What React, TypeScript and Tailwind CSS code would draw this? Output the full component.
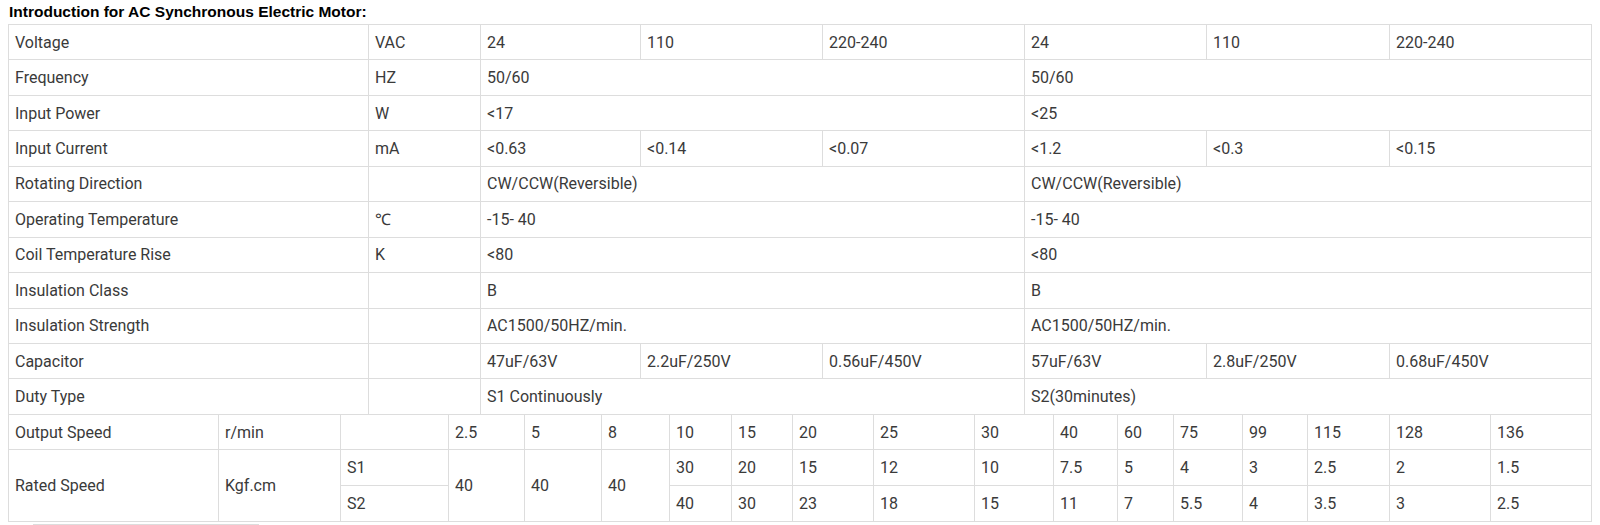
import React from "react";

type Cell = { t: string; span?: number; rspan?: number };

const topRows: Cell[][] = [
  [{ t: "Voltage" }, { t: "VAC" }, { t: "24" }, { t: "110" }, { t: "220-240" }, { t: "24" }, { t: "110" }, { t: "220-240" }],
  [{ t: "Frequency" }, { t: "HZ" }, { t: "50/60", span: 3 }, { t: "50/60", span: 3 }],
  [{ t: "Input Power" }, { t: "W" }, { t: "<17", span: 3 }, { t: "<25", span: 3 }],
  [{ t: "Input Current" }, { t: "mA" }, { t: "<0.63" }, { t: "<0.14" }, { t: "<0.07" }, { t: "<1.2" }, { t: "<0.3" }, { t: "<0.15" }],
  [{ t: "Rotating Direction" }, { t: "" }, { t: "CW/CCW(Reversible)", span: 3 }, { t: "CW/CCW(Reversible)", span: 3 }],
  [{ t: "Operating Temperature" }, { t: "℃" }, { t: "-15- 40", span: 3 }, { t: "-15- 40", span: 3 }],
  [{ t: "Coil Temperature Rise" }, { t: "K" }, { t: "<80", span: 3 }, { t: "<80", span: 3 }],
  [{ t: "Insulation Class" }, { t: "" }, { t: "B", span: 3 }, { t: "B", span: 3 }],
  [{ t: "Insulation Strength" }, { t: "" }, { t: "AC1500/50HZ/min.", span: 3 }, { t: "AC1500/50HZ/min.", span: 3 }],
  [{ t: "Capacitor" }, { t: "" }, { t: "47uF/63V" }, { t: "2.2uF/250V" }, { t: "0.56uF/450V" }, { t: "57uF/63V" }, { t: "2.8uF/250V" }, { t: "0.68uF/450V" }],
  [{ t: "Duty Type" }, { t: "" }, { t: "S1 Continuously", span: 3 }, { t: "S2(30minutes)", span: 3 }],
];

const speeds = ["2.5", "5", "8", "10", "15", "20", "25", "30", "40", "60", "75", "99", "115", "128", "136"];
const s1 = ["30", "20", "15", "12", "10", "7.5", "5", "4", "3", "2.5", "2", "1.5"];
const s2 = ["40", "30", "23", "18", "15", "11", "7", "5.5", "4", "3.5", "3", "2.5"];

const cellCls = "bg-white flex items-center pl-[6px] whitespace-nowrap overflow-hidden";

export default function App() {
  return (
    <div
      className="bg-white w-[1600px] h-[525px] pl-[8px] text-[#3a3a3a]"
      style={{ fontFamily: "Roboto, 'Noto Sans', sans-serif" }}
    >
      <div
        className="pt-[3px] h-[24px] text-[15.5px] leading-[18px] font-bold text-black pl-[1px]"
        style={{ fontFamily: "'Liberation Sans', Arial, sans-serif" }}
      >
        Introduction for AC Synchronous Electric Motor:
      </div>
      <div className="w-[1584px] text-[16px] leading-[19px]">
        <div className="grid grid-cols-[359px_111px_159px_181px_201px_181px_182px_201px] auto-rows-[34.45px] gap-[1px] p-[1px] bg-[#dddddd]">
          {topRows.map((row, ri) =>
            row.map((c, ci) => (
              <div
                key={`${ri}-${ci}`}
                className={`${cellCls} ${c.span === 3 ? "col-span-3" : ""}`}
              >
                {c.t}
              </div>
            ))
          )}
        </div>
        <div className="grid grid-cols-[209px_121px_107px_75px_76px_67px_61px_60px_80px_100px_78px_63px_55px_68px_64px_81px_100px_100px] grid-rows-[34.67px_34.67px_34.67px] gap-[1px] px-[1px] pb-[1px] bg-[#dddddd]">
          <div className={cellCls}>Output Speed</div>
          <div className={cellCls}>r/min</div>
          <div className={cellCls}></div>
          {speeds.map((s, i) => (
            <div key={`sp${i}`} className={cellCls}>
              {s}
            </div>
          ))}
          <div className={`${cellCls} row-span-2`}>Rated Speed</div>
          <div className={`${cellCls} row-span-2`}>Kgf.cm</div>
          <div className={cellCls}>S1</div>
          <div className={`${cellCls} row-span-2`}>40</div>
          <div className={`${cellCls} row-span-2`}>40</div>
          <div className={`${cellCls} row-span-2`}>40</div>
          {s1.map((s, i) => (
            <div key={`s1${i}`} className={cellCls}>
              {s}
            </div>
          ))}
          <div className={cellCls}>S2</div>
          {s2.map((s, i) => (
            <div key={`s2${i}`} className={cellCls}>
              {s}
            </div>
          ))}
        </div>
      </div>
      <div className="ml-[25px] mt-[2px] w-[226px] border-t border-[#dddddd]"></div>
    </div>
  );
}
